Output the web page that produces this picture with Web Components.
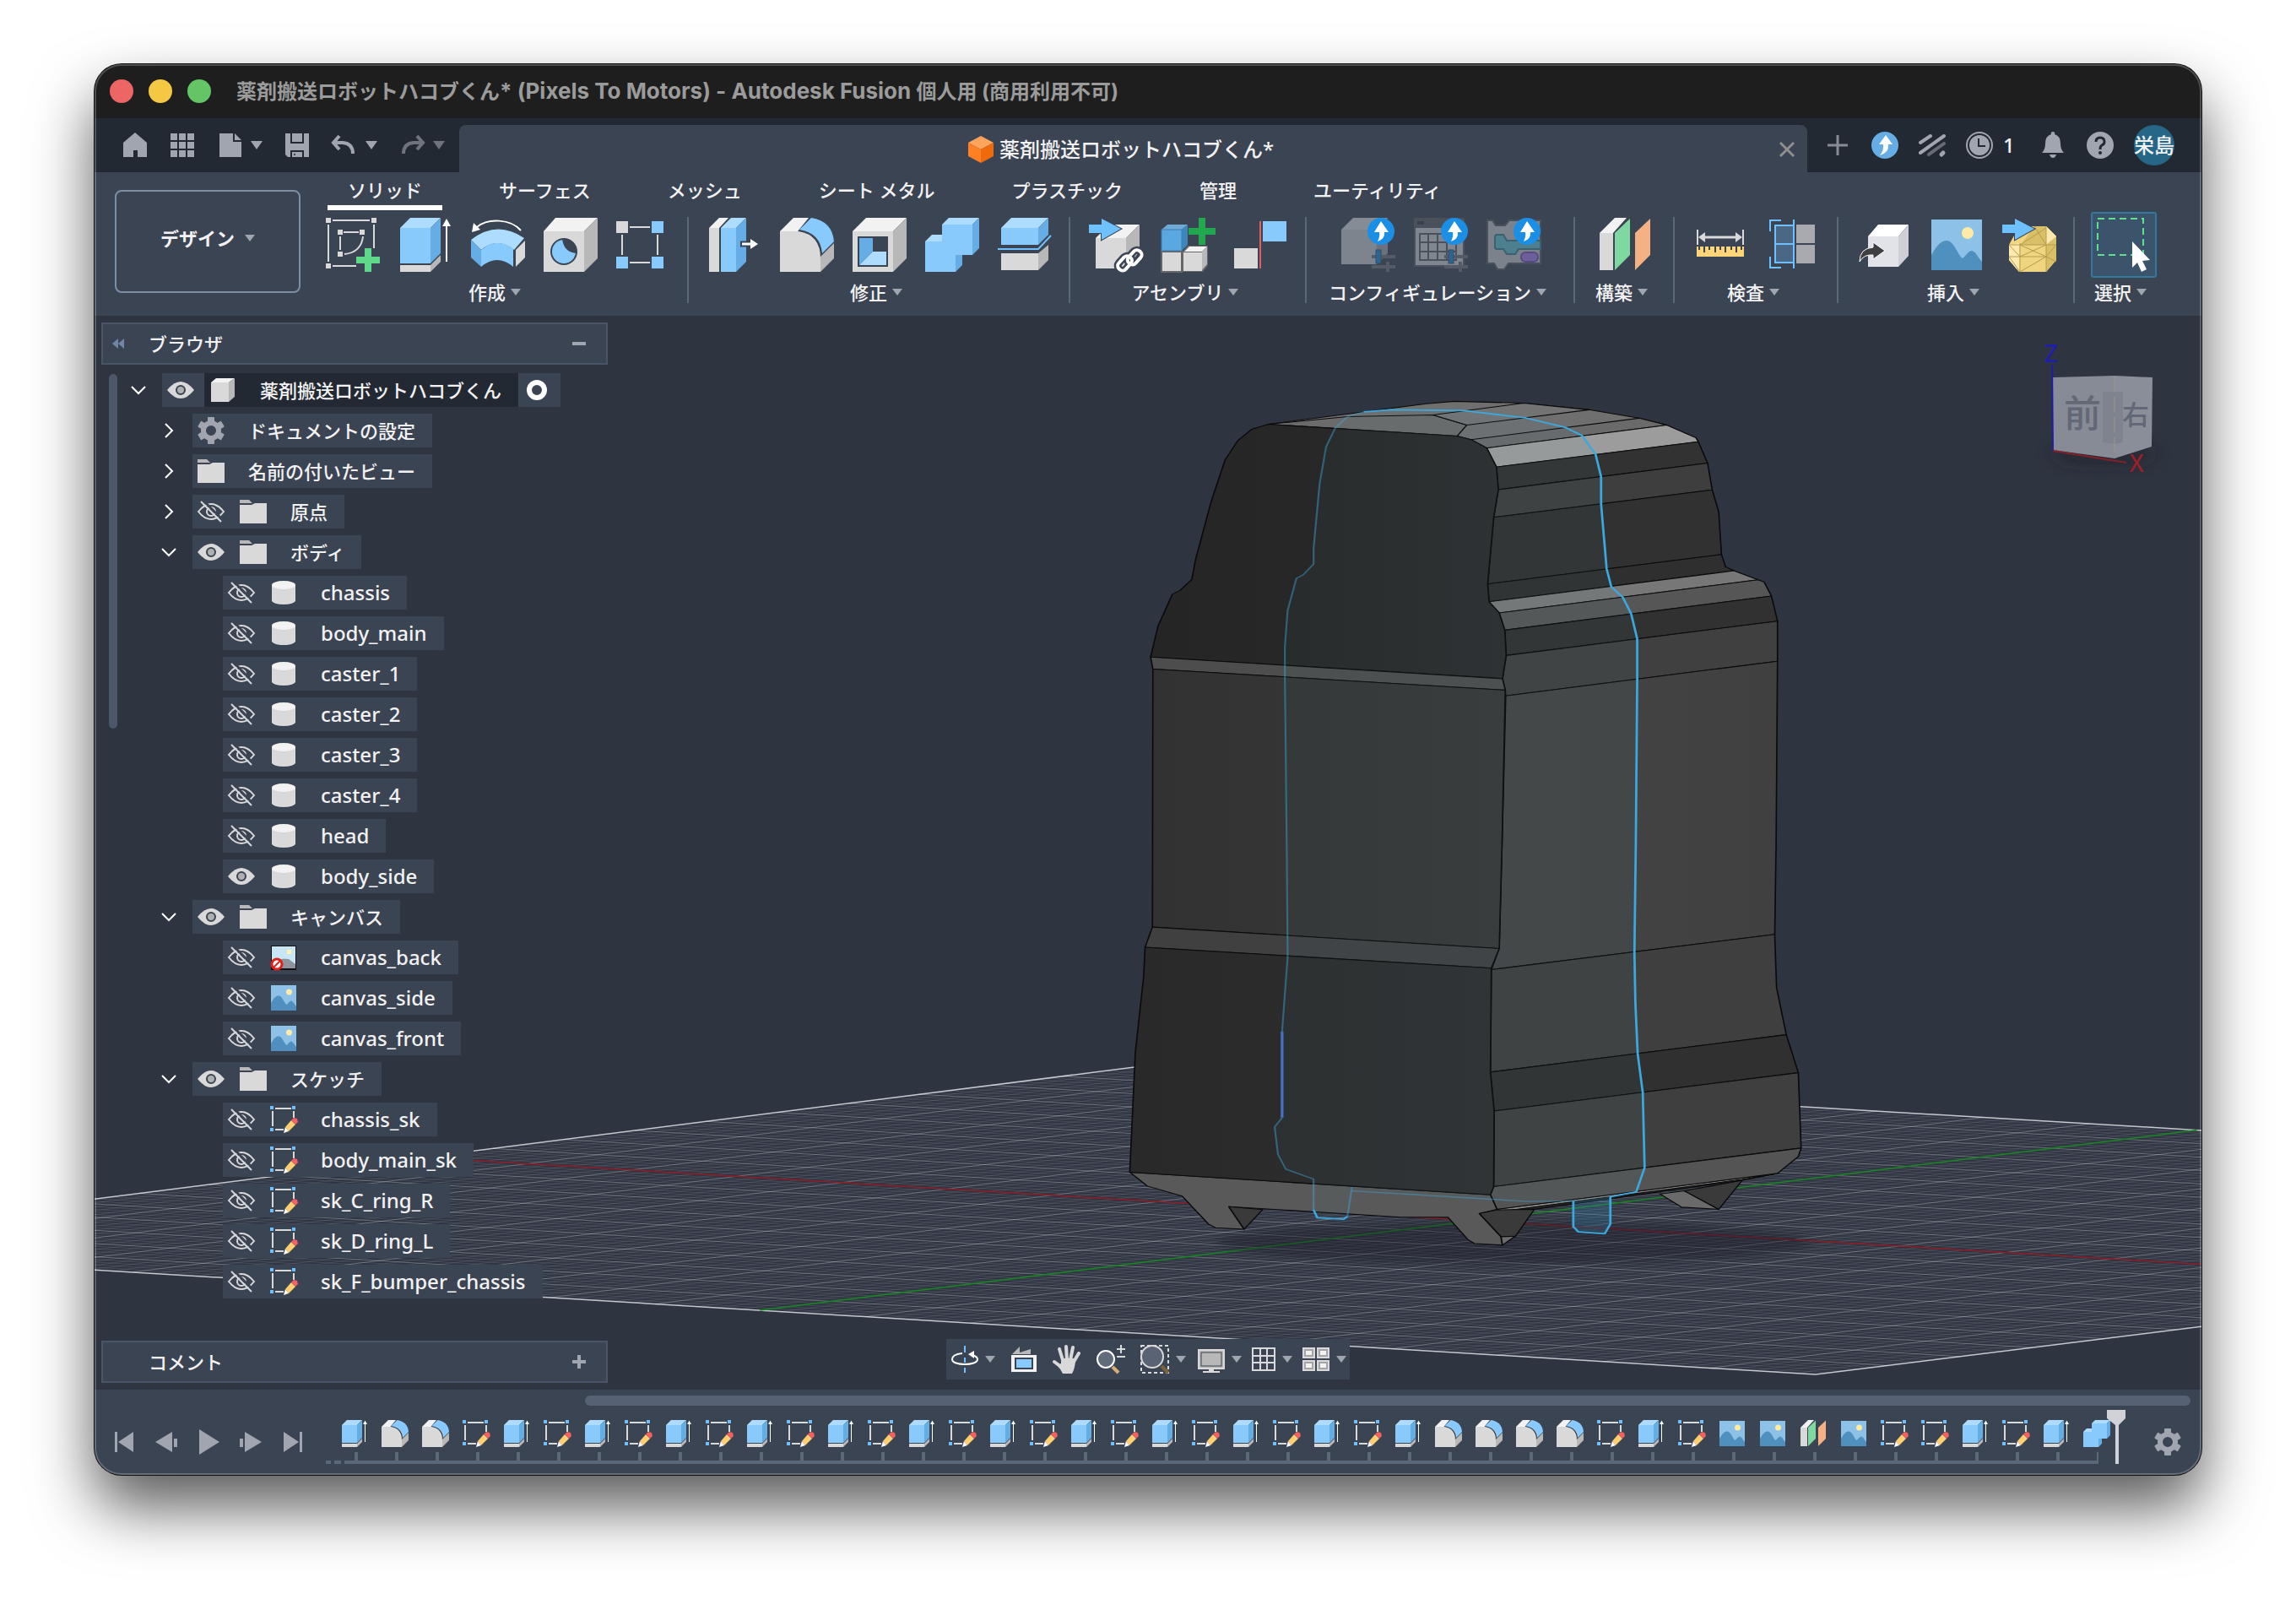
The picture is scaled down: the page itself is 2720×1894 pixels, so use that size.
<!DOCTYPE html>
<html lang="ja">
<head>
<meta charset="utf-8">
<title>薬剤搬送ロボットハコブくん* (Pixels To Motors) - Autodesk Fusion</title>
<style>
  :root {
    --panel: #3b4453;
    --dark: #222933;
    --canvas: #2e3440;
    --line: #5a687a;
    --mute: #a1a5af;
    --text: #f2f2f2;
  }
  body {
    margin: 0;
    min-height: 100vh;
    box-sizing: border-box;
    padding: 76px 112px 147px;
    display: flex;
    background: #fff;
    color: var(--text);
    font: 500 22px/32px "Noto Sans", "Noto Sans CJK JP", sans-serif;
  }
  title-bar span { font-size: 26px; }
</style>
</head>
<body>
<app-window>
  <title-bar slot="title">薬剤搬送ロボットハコブくん<span>* (Pixels To Motors) - Autodesk Fusion </span>個人用 (商用利用不可)</title-bar>
  <app-bar slot="bar">薬剤搬送ロボットハコブくん*</app-bar>
  <ribbon-bar slot="ribbon">
    <ribbon-group label="作成" tools="sketch extrude revolve hole pattern"></ribbon-group>
    <ribbon-group label="修正" tools="presspull fillet shell combine split"></ribbon-group>
    <ribbon-group label="アセンブリ" tools="insertlink newcomponent joint"></ribbon-group>
    <ribbon-group label="コンフィギュレーション" tools="config configtable configblocks" wide></ribbon-group>
    <ribbon-group label="構築" tools="plane"></ribbon-group>
    <ribbon-group label="検査" tools="measure section"></ribbon-group>
    <ribbon-group label="挿入" tools="derive image mesh"></ribbon-group>
    <ribbon-group label="選択" tools="select" active></ribbon-group>
  </ribbon-bar>
  <model-view slot="view">
    <panel-bar slot="browser" icon="minus" collapsible>ブラウザ</panel-bar>
    <tree-row slot="tree" level="0" state="open" eye="eye" icon="cube" root>薬剤搬送ロボットハコブくん</tree-row>
    <tree-row slot="tree" level="1" state="closed" icon="gear">ドキュメントの設定</tree-row>
    <tree-row slot="tree" level="1" state="closed" icon="folder">名前の付いたビュー</tree-row>
    <tree-row slot="tree" level="1" state="closed" eye="eyeoff" icon="folder">原点</tree-row>
    <tree-row slot="tree" level="1" state="open" eye="eye" icon="folder">ボディ</tree-row>
    <tree-row slot="tree" level="2" eye="eyeoff" icon="body">chassis</tree-row>
    <tree-row slot="tree" level="2" eye="eyeoff" icon="body">body_main</tree-row>
    <tree-row slot="tree" level="2" eye="eyeoff" icon="body">caster_1</tree-row>
    <tree-row slot="tree" level="2" eye="eyeoff" icon="body">caster_2</tree-row>
    <tree-row slot="tree" level="2" eye="eyeoff" icon="body">caster_3</tree-row>
    <tree-row slot="tree" level="2" eye="eyeoff" icon="body">caster_4</tree-row>
    <tree-row slot="tree" level="2" eye="eyeoff" icon="body">head</tree-row>
    <tree-row slot="tree" level="2" eye="eye" icon="body">body_side</tree-row>
    <tree-row slot="tree" level="1" state="open" eye="eye" icon="folder">キャンバス</tree-row>
    <tree-row slot="tree" level="2" eye="eyeoff" icon="imageoff">canvas_back</tree-row>
    <tree-row slot="tree" level="2" eye="eyeoff" icon="image">canvas_side</tree-row>
    <tree-row slot="tree" level="2" eye="eyeoff" icon="image">canvas_front</tree-row>
    <tree-row slot="tree" level="1" state="open" eye="eye" icon="folder">スケッチ</tree-row>
    <tree-row slot="tree" level="2" eye="eyeoff" icon="sketchpen">chassis_sk</tree-row>
    <tree-row slot="tree" level="2" eye="eyeoff" icon="sketchpen">body_main_sk</tree-row>
    <tree-row slot="tree" level="2" eye="eyeoff" icon="sketchpen">sk_C_ring_R</tree-row>
    <tree-row slot="tree" level="2" eye="eyeoff" icon="sketchpen">sk_D_ring_L</tree-row>
    <tree-row slot="tree" level="2" eye="eyeoff" icon="sketchpen">sk_F_bumper_chassis</tree-row>
    <panel-bar slot="comment" icon="plus">コメント</panel-bar>
    <nav-bar slot="nav"></nav-bar>
  </model-view>
  <time-line slot="timeline"></time-line>
</app-window>

<script>
const BASE = `
  :host, *, *::before, *::after { box-sizing: border-box; }
  button { font: inherit; color: inherit; background: none; border: 0; padding: 0; margin: 0; display: flex; align-items: center; }
  ul, ol { list-style: none; margin: 0; padding: 0; }
`;
const define = (name, css, html) => customElements.define(name, class extends HTMLElement {
  connectedCallback() {
    if (this.shadowRoot) return;
    const root = this.attachShadow({ mode: 'open' });
    root.innerHTML = `<style>${BASE}${css}</style>` + (typeof html === 'function' ? html(this) : html);
  }
});

/* ---------- icons ---------- */
const P = (points, fill, extra = '') => `<polygon points="${points}" fill="${fill}" ${extra}/>`;
const R = (x, y, w, h, fill, extra = '') => `<rect x="${x}" y="${y}" width="${w}" height="${h}" fill="${fill}" ${extra}/>`;
const L = (d, stroke, w = 2, extra = '') => `<path d="${d}" fill="none" stroke="${stroke}" stroke-width="${w}" ${extra}/>`;
const F = (d, fill, extra = '') => `<path d="${d}" fill="${fill}" ${extra}/>`;
const BG = '#3b4453', B1 = '#89cafc', B2 = '#addcff', B3 = '#65ade4', G1 = '#d9d9d9', G2 = '#f2f2f2', G3 = '#b8b8b8', M = '#a1a5af', AR = '#6ec1ff';
const ARROW_IN = F('M0 8H15V1L38 13 15 26V18H0Z', AR, `stroke="${BG}" stroke-width="2" paint-order="stroke"`);
const UP = (cx, cy) => `<circle cx="${cx}" cy="${cy}" r="16" fill="#1b8ee6"/>` +
  `<path transform="translate(${cx} ${cy})" d="M0-12 9 1H4Q5 9-4 12-1 6-2 1H-8Z" fill="#fff"/>`;
const SLIDERS = R(36, 44, 28, 4, '#555b66') + R(36, 56, 28, 4, '#555b66') + R(53, 52, 4, 12, '#555b66') + R(41, 38, 6, 16, '#2b6596', 'stroke="#3a4a5c"');
const IMG = R(2, 2, 60, 60, '#8dc1e8') + '<circle cx="45" cy="18" r="7" fill="#ffeaa6"/>' +
  F('M2 44C10 30 15 27 20 27 29 27 33 44 39 48 44 44 46 39 50 39 55 40 57 47 62 52V62H2Z', '#4f90bf');
const GEAR = (() => {
  let d = '';
  for (let i = 0; i < 6; i++) d += `<rect x="12" y="0" width="8" height="9" rx="1" transform="rotate(${i * 60} 16 16)"/>`;
  return `<g fill="${M}">${d}<path fill-rule="evenodd" d="M16 4a12 12 0 1 0 0 24 12 12 0 0 0 0-24Zm0 6a6 6 0 1 1 0 12 6 6 0 0 1 0-12Z"/></g>`;
})();

const ICONS = {
  sketch: [64, [[0,0],[54,0],[0,54],[14,14],[40,14],[14,40]].map(([x, y]) => R(x, y, 6, 6, G1)).join('') +
    L('M8 3H52M3 8V52M57 8V36M8 57H36M21 17H39M17 22V38M44 22Q42 41 22 43', G1) +
    R(36, 46, 28, 8, '#5fd889') + R(46, 36, 8, 28, '#5fd889')],
  extrude: [64, P('2,12 14,0 50,0 38,12', B2) + P('38,12 50,0 50,42 38,54', B3) + R(2, 12, 36, 42, B1) + R(2, 56, 36, 8, G1) + P('38,56 50,44 50,52 38,64', G3) +
    L('M57 8V52', '#fff', 2) + P('57,1 62,10 52,10', '#fff')],
  revolve: [64, F('M0 26Q31 2 63 24L51 38Q31 22 12 38Z', B2) + F('M12 38Q31 22 50 37V58Q31 42 12 58Z', B1) + P('0,26 12,38 12,58 0,47', B3) +
    P('53,38 64,27 64,47 53,58', G1) + L('M59 15C47 1 20 0 7 11', '#fff', 2) + P('1,17 3,6 11,14', '#fff')],
  hole: [64, P('0,16 14,0 64,0 48,16', G2) + P('48,16 64,0 64,48 48,64', G3) + R(0, 16, 48, 48, G1) +
    `<circle cx="24" cy="40" r="16" fill="${BG}"/><circle cx="24" cy="40" r="14" fill="${B1}"/>` + F('M22 25A15 15 0 0 1 39 42Q24 41 22 25Z', BG)],
  pattern: [64, R(0, 4, 14, 14, G1) + R(42, 4, 14, 14, B1) + R(0, 46, 14, 14, B1) + R(42, 46, 14, 14, B1) + L('M16 11H40M7 20V44M49 20V44M16 53H40', G1)],
  presspull: [64, P('2,12 14,0 25,0 14,12', G2) + R(2, 12, 12, 52, G1) + P('16,12 28,0 46,0 34,12', B2) + P('34,12 46,0 46,52 34,64', B3) + R(16, 12, 18, 52, B1) +
    L('M39 31H53', BG, 7) + L('M41 31H54', '#fff', 3) + P('51,25 60,31 51,37', '#fff')],
  fillet: [64, P('0,16 16,0 34,0 21,16', G2) + F('M48 46 64 30V48L48 64Z', G3) + F('M0 16H22Q48 20 48 48V64H0Z', G1) + F('M23 14 37 0Q62 4 64 28L50 42Q48 18 23 14Z', B1)],
  shell: [64, P('0,16 16,0 64,0 48,16', G2) + P('48,16 64,0 64,48 48,64', G3) + R(0, 16, 48, 48, G1) + R(6, 22, 36, 36, BG) + P('8,24 24,24 24,40 8,56', B3) + P('8,56 24,40 40,40 40,56', B2)],
  combine: [64, P('20,8 28,0 64,0 56,8', B2) + P('56,8 64,0 64,36 56,44', B3) + P('0,28 8,20 20,20 20,28', B2) + P('36,44 44,44 44,56 36,64', B3) + F('M20 8H56V44H36V64H0V28H20Z', B1)],
  split: [64, P('4,12 16,0 60,0 48,12', B2) + P('48,12 60,0 60,20 48,32', B3) + R(4, 12, 44, 20, B1) + L('M0 37H48L63 21', AR) + R(4, 42, 44, 20, G1) + P('48,42 60,32 60,50 48,62', G3)],
  insertlink: [64, P('8,24 24,8 60,8 44,24', G2) + P('44,24 60,8 60,40 44,60', G3) + R(8, 24, 36, 36, G1) + ARROW_IN +
    [[BG, 9], ['#fff', 4]].map(([c, w]) => `<g fill="none" stroke="${c}" stroke-width="${w}" transform="rotate(42 48 50)"><rect x="41" y="47" width="11" height="19" rx="5"/><rect x="45" y="34" width="11" height="19" rx="5"/></g>`).join('')],
  newcomponent: [64, R(0, 40, 24, 24, G1, 'stroke="#666" stroke-width="2"') + P('25,40 31,33 55,33 55,56 49,64 25,64', '#666') + R(26, 41, 22, 22, G1) + P('27,40 33,34 54,34 48,40', G2) + P('48,40 54,34 54,55 48,62', G3) +
    P('0,14 7,8 31,8 24,14', '#6fa9d6') + P('24,14 31,8 31,32 24,39', '#3d86bd') + R(0, 14, 24, 25, '#5ba7e0', 'stroke="#417fae"') + R(32, 12, 32, 8, '#21a84f') + R(44, 0, 8, 32, '#21a84f')],
  joint: [64, R(0, 36, 28, 24, G1) + R(30, 4, 2, 56, '#e0605e') + R(34, 4, 28, 24, B1)],
  config: [64, P('0,14 14,0 55,0 42,14', '#868c96') + P('42,14 55,0 55,42 42,55', '#6a717c') + R(0, 14, 42, 41, '#7d848e') + UP(47, 16) + SLIDERS],
  configtable: [64, R(0, 0, 60, 58, '#4b515b') + R(4, 4, 8, 4, '#394150') + R(2, 12, 56, 44, '#7f8690') + L('M7 19H50V50H7ZM7 29H50M7 40H50M17 19V50M28 19V50M39 19V50', '#4b515b', 2) + UP(48, 16) + SLIDERS],
  configblocks: [64, F('M1 3H7L11 9H22L27 3H64V54H26L21 61H13L9 54H1Z', '#7b828c', 'stroke="#4b515b" stroke-width="2"') + F('M12 20H20L24 27H64V37H38L34 43H24L20 37H12Q10 37 10 34V24Q10 20 12 20Z', '#4d7f8e', 'stroke="#39616f" stroke-width="2"') +
    R(41, 41, 20, 11, '#6d5f9a', 'rx="5" stroke="#574b80" stroke-width="2"') + UP(48, 16)],
  plane: [64, P('2,18 20,0 34,0 18,18', G2) + R(2, 18, 16, 44, G1) + P('20,18 38,1 38,44 20,62', '#7fd8a0') + P('44,18 62,1 62,44 44,62', '#f5b183')],
  measure: [64, R(4, 34, 56, 12, '#ffd57a') + L('M7 34V38M13 34V41M19 34V38M26 34V41M32 34V38M38 34V41M45 34V38M51 34V41M57 34V38', BG, 2) + L('M5 14V32M59 14V32', G1) + L('M12 23H52', G1, 3) + P('6,23 14,17 14,29', G1) + P('58,23 50,17 50,29', G1)],
  section: [64, L('M5 16V3H18M5 46V59H18M33 2V60', AR) + R(11, 9, 22, 22, '#4a6886', `stroke="${AR}" stroke-width="2"`) + R(11, 31, 22, 22, '#4a6886', `stroke="${AR}" stroke-width="2"`) + R(36, 8, 22, 22, '#a9aab0') + R(36, 32, 22, 22, '#a9aab0')],
  derive: [64, P('13,22 25,8 61,8 49,22', '#fff') + P('49,22 61,8 61,45 49,58', '#cdced6') + R(13, 22, 36, 36, '#e2e3e8') + F('M3 52Q3 36 19 35V29L33 39 19 49V44Q8 43 3 52Z', '#3f3f42', 'stroke="#fff" stroke-width="1"')],
  image: [64, IMG],
  mesh: [64, P('8,32 20,10 52,10 64,22 64,50 52,64 20,64 8,50', '#f2d684') + P('22,32 38,10 52,10 64,22 64,50 52,64 52,32', '#d9bf66') + P('22,32 52,32 52,64 22,64', '#f0d580') + P('8,32 20,30 20,64 8,50', '#ffe9ad') + P('52,10 64,22 52,32', '#ffe9ad') +
    L('M8 32H64M8 46H52L64 32M21 30V64M52 10V64M21 32 52 46 21 64M52 32 21 46 8 32M52 46 64 52M38 10 52 32M21 32 52 12M8 46 21 64', '#b59c4e', 1) + ARROW_IN],
  select: [64, R(1, 1, 54, 43, 'none', 'stroke="#5fe08c" stroke-width="2" stroke-dasharray="8 5"') + P('42,28 42,59 48,53 53,64 59,61 54,51 63,50', '#fff')],

  home: [32, F('M2 13 16 1 30 13V30H19V22H14V30H2Z', M)],
  apps: [32, [2, 12, 22].map(x => [2, 12, 22].map(y => R(x, y, 8, 8, M)).join('')).join('')],
  file: [32, F('M4 2H20V12H30V30H4Z', M) + P('22,2 30,10 22,10', M)],
  save: [32, F('M2 2H8V14H24V2H30V30H24V22H8V30H5L2 27Z', M) + R(10, 2, 12, 10, M) + R(10, 24, 12, 6, M) + R(12, 26, 2, 2, BG)],
  undo: [32, L('M10 5 3 13 10 21M4 13H14Q26 14 26 26', M, 4)],
  redo: [32, `<g opacity=".6">${L('M22 5 29 13 22 21M28 13H18Q6 14 6 26', M, 4)}</g>`],
  tri: [16, P('1,3 15,3 8,13', M)],
  tri12: [12, P('0,2 12,2 6,10', M)],
  doccube: [32, P('16,0 31,8 16,16 1,8', '#ffa45c') + P('1,8 16,16 16,32 1,24', '#ff8124') + P('31,8 16,16 16,32 31,24', '#f06a0c')],
  close: [24, L('M4 4 20 20M20 4 4 20', '#8f8f8f', 3)],
  add: [32, L('M16 4V28M4 16H28', M, 3, 'opacity=".8"')],
  upgrade: [32, `<circle cx="16" cy="16" r="16" fill="#65ade4"/>` + F('M17 4 25 15H20Q21 25 10 28 15 22 14 15H9Z', '#fff')],
  slashes: [32, L('M2 13 14 5M2 25 30 5', M, 4, 'stroke-linecap="round"') + L('M12 27 30 14', '#666b76', 4, 'stroke-linecap="round"') + L('M27 27 29 25', M, 5, 'stroke-linecap="round"')],
  clock: [32, `<circle cx="16" cy="16" r="15" fill="none" stroke="${M}" stroke-width="2"/><circle cx="16" cy="16" r="12" fill="${M}"/>` + L('M15 8V17H23', '#222933', 2)],
  bell: [32, F('M16 0Q19 0 18 3 25 5 25 14 25 21 29 25H3Q7 21 7 14 7 5 14 3 13 0 16 0Z', M) + F('M12 27H20Q19 31 16 31T12 27Z', M)],
  help: [32, `<circle cx="16" cy="16" r="16" fill="${M}"/>` + L('M11 12Q11 7 16 7T21 12Q21 15 18 16 16 17 16 21', '#222933', 3) + '<circle cx="16" cy="25" r="2" fill="#222933"/>'],

  back2: [16, P('8,2 8,14 1,8', '#7186a5') + P('15,2 15,14 8,8', '#7186a5')],
  minus: [16, R(0, 6, 16, 4, M)],
  plus: [16, R(0, 6, 16, 4, M) + R(6, 0, 4, 16, M)],
  open: [32, L('M8 12 16 20 24 12', '#fff', 2)],
  closed: [32, L('M12 8 20 16 12 24', '#fff', 2)],
  eye: [32, F('M0 16Q8 6 16 6T32 16Q24 26 16 26T0 16Z', G1) + `<circle cx="16" cy="16" r="5" fill="#b0b0b0" stroke="${BG}" stroke-width="2"/>`],
  eyeoff: [32, L('M1 16Q8 7 16 7T31 16Q24 25 16 25T1 16Z', G1, 2) + `<circle cx="16" cy="16" r="5" fill="none" stroke="${G1}" stroke-width="2"/>` + L('M7 3 31 27', BG, 3) + L('M4 4 28 28', G1, 2)],
  cube: [32, P('2,7 8,2 30,2 23,7', G2) + P('23,7 30,2 30,24 23,30', G3) + R(2, 7, 21, 23, G1)],
  gear: [32, GEAR],
  folder: [32, F('M0 2H11L15 6H0Z', '#b8b8b8') + F('M0 8H14L18 6H32V30H0Z', G1)],
  body: [32, F('M2 7V26Q5 30 16 30T30 26V7Z', G1) + `<ellipse cx="16" cy="7" rx="14" ry="5" fill="${G2}"/>`],
  imageoff: [32, R(1, 2, 30, 29, '#111') + R(2, 3, 28, 26, '#c9e6f5') + R(20, 7, 5, 5, '#fff3b8') + F('M2 26C10 16 16 18 22 18L30 24V29H2Z', '#8d949c') +
    '<circle cx="8" cy="24" r="6" fill="#fff" stroke="#e0201c" stroke-width="3"/>' + L('M4 28 12 20', '#e0201c', 2)],
  sketchpen: [32, R(0, 0, 4, 4, AR) + R(26, 0, 4, 4, AR) + R(0, 26, 4, 4, AR) + L('M6 3H25M3 6V24M28 6V14M6 28H16', G1, 2) +
    P('16,32 18,25 22,30', '#fff') + P('18,25 25,17 30,22 22,30', '#ffd071') + P('25,17 28,14 32,15 33,19 30,22', '#f2605f')],
  radio: [32, '<circle cx="16" cy="16" r="9" fill="none" stroke="#fff" stroke-width="6"/>'],

  orbit: [32, L('M16 0V8M16 14V20M16 26V32', AR, 2) + L('M13 9C4 10 1 12 1 16 1 20 8 22 16 22S31 20 31 16Q31 13 25 11', '#fff', 2) + P('20,10 27,6 27,15', '#fff')],
  lookat: [32, F('M2 10 11 1V8L24 4V10Z', '#b8b8b8') + R(1, 11, 30, 20, G2) + R(6, 15, 20, 12, B1, `stroke="${BG}" stroke-width="2"`)],
  hand: [34, `<g stroke-linecap="round">` + L('M16 2 17 18', G1, 4) + L('M8 5 12 18', G1, 4) + L('M24 3 21 18', G1, 4) + L('M31 10 25 20', G1, 4) + L('M2 20 10 26', G1, 4) + '</g>' + F('M10 16H25L27 20Q26 29 23 34H12Q9 28 5 24L10 22Z', G1)],
  zoom: [34, `<circle cx="11" cy="17" r="10" fill="#626b7b" stroke="#fff" stroke-width="2"/>` + L('M19 26 26 33', '#dcae73', 4) + L('M29 0V10M24 5H34M24 14H34', G1, 2)],
  zoomwin: [34, R(1, 1, 32, 32, 'none', `stroke="${G1}" stroke-width="2" stroke-dasharray="4 3"`) + `<circle cx="14" cy="14" r="13" fill="#5a6373" stroke="${G1}" stroke-width="2"/>` + L('M25 25 33 33', '#7d6138', 4)],
  monitor: [32, R(1, 5, 30, 22, '#b8b8b8', `stroke="${G1}" stroke-width="2"`) + R(4, 8, 24, 16, 'none', `stroke="${BG}"`) + R(13, 28, 6, 3, G1) + R(6, 30, 20, 2, G1)],
  grid: [28, L('M1 1H27V27H1ZM1 10H27M1 18H27M10 1V27M18 1V27', G1, 2)],
  quad: [32, [[0, 2], [17, 2], [0, 17], [17, 17]].map(([x, y]) => R(x, y, 15, 13, G1) + R(x + 3, y + 3, 9, 7, G2, 'stroke="#a5a5a5" stroke-width="2"')).join('')],

  first: [26, R(2, 1, 3, 24, M) + P('24,1 24,25 6,13', M)],
  prev: [26, P('20,1 20,25 0,13', M) + R(22, 9, 4, 10, M)],
  play: [26, P('2,0 26,15 2,30', M, 'transform="translate(0 -2)"')],
  next: [26, P('6,1 6,25 26,13', M) + R(0, 9, 4, 10, M)],
  last: [26, R(21, 1, 3, 24, M) + P('2,1 2,25 20,13', M)]
};
define('ui-icon', `
  :host { display: block; flex: none; }
  svg { display: block; overflow: visible; }
`, el => {
  const [box, art] = ICONS[el.getAttribute('name')];
  const size = el.getAttribute('size') || box;
  return `<svg width="${size}" height="${size}" viewBox="0 0 ${box} ${box}" aria-hidden="true">${art}</svg>`;
});
const icon = (name, size) => `<ui-icon name="${name}"${size ? ` size="${size}"` : ''}></ui-icon>`;

/* ---------- window ---------- */
define('app-window', `
  :host { display: flex; flex-direction: column; flex: 1; min-width: 0; position: relative; border-radius: 32px; overflow: hidden; background: var(--canvas);
    box-shadow: 0 0 0 1px #111, 0 38px 72px rgba(0, 0, 0, .65); }
  :host::after { content: ""; position: absolute; inset: 0; border: 2px solid rgba(255, 255, 255, .22); border-radius: inherit; pointer-events: none; }
  ::slotted([slot="view"]) { flex: 1; }
`, `<slot name="title"></slot><slot name="bar"></slot><slot name="ribbon"></slot><slot name="view"></slot><slot name="timeline"></slot>`);

define('title-bar', `
  :host { display: flex; align-items: center; height: 64px; padding: 0 18px; gap: 18px; background: #1e1e1e; color: #9b9b9b;
    font: 700 24px/32px Inter, "Noto Sans CJK JP", sans-serif; }
  button { width: 28px; height: 28px; border-radius: 50%; }
  .close { background: #ed6665; } .min { background: #f4c843; } .max { background: #64c466; }
  .text { margin-left: 12px; white-space: pre; }
`, `<button class="close" aria-label="閉じる"></button><button class="min" aria-label="しまう"></button><button class="max" aria-label="拡大"></button><div class="text"><slot></slot></div>`);

define('app-bar', `
  :host { display: flex; height: 64px; background: var(--dark); }
  .left { display: flex; align-items: center; gap: 24px; padding: 0 16px 0 32px; }
  .left button { gap: 8px; }
  .tab { flex: 1; display: flex; align-items: center; margin-top: 8px; padding: 2px 12px 0 0; background: var(--panel); border-radius: 8px 8px 0 0; font-size: 24px; }
  .name { flex: 1; display: flex; align-items: center; justify-content: center; gap: 6px; padding-left: 6px; }
  .right { display: flex; align-items: center; gap: 24px; padding: 0 32px 0 20px; font-size: 24px; }
  .jobs { width: 63px; gap: 12px; }
  .user { width: 48px; height: 48px; border-radius: 50%; background: #266687; justify-content: center; font-size: 24px; white-space: nowrap; }
`, `<div class="left">
    <button aria-label="ホーム">${icon('home')}</button><button aria-label="データパネル">${icon('apps')}</button>
    <button aria-label="ファイル">${icon('file')}${icon('tri')}</button><button aria-label="保存">${icon('save')}</button>
    <button aria-label="元に戻す">${icon('undo')}${icon('tri')}</button><button aria-label="やり直し">${icon('redo')}<ui-icon name="tri" style="opacity:.6"></ui-icon></button>
  </div>
  <div class="tab"><div class="name">${icon('doccube')}<span><slot></slot></span></div><button aria-label="タブを閉じる">${icon('close')}</button></div>
  <div class="right">
    <button aria-label="新規">${icon('add')}</button><button aria-label="アップグレード">${icon('upgrade')}</button><button aria-label="拡張機能">${icon('slashes')}</button>
    <button class="jobs">${icon('clock')}1</button><button aria-label="通知">${icon('bell')}</button><button aria-label="ヘルプ">${icon('help')}</button>
    <button class="user">栄島</button>
  </div>`);

/* ---------- ribbon ---------- */
define('ribbon-bar', `
  :host { display: flex; height: 170px; background: var(--panel); }
  .space { align-self: center; justify-content: center; gap: 12px; width: 220px; height: 122px; margin: 0 8px 6px 24px; padding-bottom: 8px; border: 2px solid #7b8ea6; border-radius: 8px; font-weight: 700; }
  .main { flex: 1; display: flex; flex-direction: column; }
  nav { display: flex; gap: 43px; padding: 6px 0 0 24px; height: 45px; }
  nav button { padding: 0 24px 3px; align-items: center; border-bottom: 6px solid transparent; white-space: nowrap; }
  nav button[aria-selected="true"] { border-color: #fff; }
  .groups { display: flex; flex: 1; padding-top: 8px; }
`, `<button class="space">デザイン${icon('tri12')}</button>
  <div class="main">
    <nav role="tablist">${['ソリッド', 'サーフェス', 'メッシュ', 'シート メタル', 'プラスチック', '管理', 'ユーティリティ']
      .map((t, i) => `<button role="tab" aria-selected="${i === 0}">${t}</button>`).join('')}</nav>
    <div class="groups"><slot></slot></div>
  </div>`);

define('ribbon-group', `
  :host { display: flex; flex-direction: column; align-items: center; height: 102px; padding: 0 20px 0 22px; border-left: 2px solid var(--line); }
  :host(:first-child) { border-color: transparent; margin-left: -2px; }
  :host([wide]) { padding: 0 22px 0 24px; }
  .tools { display: flex; gap: 22px; height: 64px; margin: 1px 0 8px; align-items: center; }
  .label { gap: 6px; padding: 0 10px 0 2px; white-space: nowrap; }
  :host([active]) { padding-left: 19px; }
  :host([active]) .tools button { padding: 5px; border: 2px solid #33789f; border-radius: 3px; background: #3c546b; }
`, el => `<div class="tools">${el.getAttribute('tools').split(' ').map(t => `<button aria-label="${t}">${icon(t)}</button>`).join('')}</div>
  <button class="label">${el.getAttribute('label')}${icon('tri12')}</button>`);

/* ---------- model view ---------- */
const GRID = (() => {
  // Perspective map of the unit square onto the floor plane (left, top, right, bottom corners).
  const [x0, y0, x1, y1, x2, y2, x3, y3] = [-336, 1477, 1344, 1264, 3876, 1414, 2151, 1628];
  const dx1 = x1 - x2, dx2 = x3 - x2, sx = x0 - x1 + x2 - x3, dy1 = y1 - y2, dy2 = y3 - y2, sy = y0 - y1 + y2 - y3;
  const det = dx1 * dy2 - dx2 * dy1, g = (sx * dy2 - dx2 * sy) / det, h = (dx1 * sy - sx * dy1) / det;
  const at = (u, v) => {
    const w = g * u + h * v + 1;
    return [((x1 - x0 + g * x1) * u + (x3 - x0 + h * x3) * v + x0) / w, ((y1 - y0 + g * y1) * u + (y3 - y0 + h * y3) * v + y0) / w].map(n => n.toFixed(1)).join(' ');
  };
  let minor = '', major = '';
  for (let i = 1; i < 100; i++) {
    const t = i / 100, d = `M${at(t, 0)}L${at(t, 1)}M${at(0, t)}L${at(1, t)}`;
    if (i === 50) continue;
    if (i % 5) minor += d; else major += d;
  }
  return `<polygon points="${x0},${y0} ${x1},${y1} ${x2},${y2} ${x3},${y3}" fill="#2f3542" stroke="#c4c7cc" stroke-width="1.5"/>
    <path d="${minor}" stroke="#fff" stroke-opacity=".1"/><path d="${major}" stroke="#fff" stroke-opacity=".28"/>
    <path d="M${at(.5, 0)}L${at(.5, 1)}" stroke="#8f1d26" stroke-width="1.5"/><path d="M${at(0, .5)}L${at(1, .5)}" stroke="#158a1e" stroke-width="1.5"/>`;
})();

const EDGE = 'stroke="#0a0a0a"';
const ROBOT = `<g transform="translate(1300 440) scale(.5485 .3571)" stroke-linejoin="round" stroke-width="3">
  <ellipse cx="900" cy="2890" rx="640" ry="70" fill="#1a1e27" opacity=".4" filter="url(#soft)"/>
  ${P('1215,2728 1268,2718 1342,2779 1262,2772', '#6a6a6a', EDGE)}
  ${P('1268,2718 1393,2683 1342,2779', '#3a3a3a', EDGE)}
  ${P('369,175 710,107 771,99 921,105 1062,127 1170,155 1230,178 841,254 807,226 777,214', '#6f6f70', EDGE)}
  ${P('369,175 540,150 725,144 798,178 777,214', '#6b6b6b', EDGE)}
  ${P('725,144 921,105 1062,127 798,178', '#737374', EDGE)}
  ${P('807,226 1170,155 1230,178 841,254', '#6a6a6b', EDGE)}
  ${P('841,254 1230,178 1293,220 1298,233 862,317', '#9c9c9c', EDGE)}
  ${P('862,317 1298,233 1318,304 866,392', '#323232', EDGE)}
  ${P('866,392 1318,304 1328,393 856,484', '#3e3e3e', EDGE)}
  ${P('856,484 1328,393 1342,465 1348,607 843,705', '#313131', EDGE)}
  ${P('843,705 1348,607 1357,648 1375,661 846,764', '#2f2f2f', EDGE)}
  ${P('846,764 1375,661 1427,691 868,801', '#777778', EDGE)}
  ${P('868,801 1427,691 1440,698 1456,745 880,858', '#565656', EDGE)}
  ${P('880,858 1456,745 1469,828 883,942', '#313131', EDGE)}
  ${P('883,942 1469,828 1469,961 882,1076 881,1057 875,1019', '#404040', EDGE)}
  ${P('882,1076 1469,961 1466,1568 1463,1867 851,1984 868,1914 874,1568', 'url(#side)', EDGE)}
  ${P('851,1984 1463,1867 1467,2044 1488,2200 849,2324', '#3f3f3f', EDGE)}
  ${P('849,2324 1488,2200 1514,2326 857,2453', '#303030', EDGE)}
  ${P('857,2453 1514,2326 1520,2576 856,2704', '#3f3f3f', EDGE)}
  ${P('944,2779 1393,2683 1469,2660 863,2779', '#262626', EDGE)}
  ${P('825,2793 863,2779 1469,2660 1393,2680 880,2784', '#8a8a8a', EDGE)}
  ${P('856,2704 1520,2576 1514,2604 1469,2660 863,2779 849,2731', '#545454', EDGE)}
  ${P('70,2656 849,2731 863,2779 825,2793 872,2870 875,2898 815,2893 800,2879 757,2805 655,2805 284,2770 317,2845 255,2840 240,2828 183,2735 108,2702', '#595959', EDGE)}
  ${P('284,2770 357,2780 317,2845', '#3a3a3a', EDGE)}
  ${P('825,2793 863,2781 944,2779 903,2868 872,2870', '#3a3a3a', EDGE)}
  ${P('872,2870 903,2868 875,2898', '#6a6a6a', EDGE)}
  ${P('369,175 777,214 807,226 841,254 862,317 866,392 856,484 843,705 846,764 868,801 880,858 883,942 875,1019 115,947 131,845 162,739 178,727 204,690 212,625 246,430 276,293 303,230 333,192', 'url(#head)', EDGE)}
  ${P('115,947 875,1019 881,1057 120,987', '#4d4d4d', EDGE)}
  ${P('120,987 881,1057 874,1568 868,1914 119,1843', 'url(#front)', EDGE)}
  ${P('119,1843 868,1914 851,1979 103,1910', '#404041', EDGE)}
  ${P('103,1910 851,1979 849,2324 857,2453 856,2704 849,2731 70,2656 82,2259 100,2007', 'url(#low)', EDGE)}
  <path fill="#5a86a0" fill-opacity=".06" d="M575 134 633 127 792 130 925 154 1010 185 1047 213 1076 275 1088 349V440L1100 655 1110 714 1135 749 1153 804 1166 887V1020L1163 1568 1160 1925 1162 2091 1167 2263 1178 2392 1182 2641 1164 2721 1108 2738V2828L1096 2860 1039 2854 1028 2837V2751L928 2753 550 2718 540 2803 532 2812 475 2807 467 2781V2679L407 2646 390 2597 383 2506 399 2475V2189L411 1941 409 1568 405 1010V912L411 792 430 686 444 675 467 639V587L480 373 494 250 514 187 540 150Z"/>
  <path fill="#2f86b4" fill-opacity=".22" d="M1028 2751 1108 2738V2828L1096 2860 1039 2854 1028 2837Z"/>
  <g fill="none" stroke="#3ba9dd" stroke-width="5">
    <path d="M575 134 633 127 792 130 925 154 1010 185 1047 213 1076 275 1088 349V440L1100 655 1110 714 1135 749 1153 804 1166 887V1020L1163 1568 1160 1925 1162 2091 1167 2263 1178 2392 1182 2641 1164 2721 1108 2738V2828L1096 2860 1039 2854 1028 2837V2751"/>
    <path d="M467 2781 475 2807 532 2812 540 2803"/>
    <path opacity=".45" stroke-width="4" d="M575 134 540 150 514 187 494 250 480 373 467 587V639L444 675 430 686 411 792 405 912V1010L409 1568 411 1941 399 2189M399 2475 383 2506 390 2597 407 2646 467 2679V2781M540 2803 550 2705M550 2718 790 2740 928 2753 1028 2751"/>
    <path stroke="#456fcb" stroke-width="6" d="M399 2189V2475"/>
  </g></g>`;

const CUBE = `
  <ellipse cx="2492" cy="538" rx="62" ry="10" fill="#1b1f28" opacity=".6" filter="url(#soft)"/>
  ${P('2432,447 2505,445 2505,543 2432,533', '#878b95')}
  ${P('2505,445 2550,447 2549,529 2505,543', '#8a8e98')}
  ${P('2491,464 2515,464 2515,524 2506,526 2491,524', '#7e838d')}
  <path d="M2505 446V543" stroke="#9a968f" stroke-dasharray="18 6" fill="none"/>
  <path d="M2431 432 2432 534" stroke="#1c1ca8" stroke-width="2"/>
  <path d="M2432 534 2519 548" stroke="#85202a" stroke-width="2"/>
  <g text-anchor="middle" font-weight="500" font-family="'Noto Sans','Noto Sans CJK JP',sans-serif">
    <text x="2467" y="506" font-size="44" fill="#626875">前</text>
    <text x="2530" y="503" font-size="32" fill="#626875">右</text>
    <text x="2430" y="429" font-size="28" fill="#1e1eac">Z</text>
    <text x="2531" y="559" font-size="28" fill="#97202a">X</text>
  </g>`;

define('model-view', `
  :host { display: grid; grid-template: minmax(0, 1fr) / minmax(0, 1fr); min-height: 0; background: var(--canvas); }
  .scene { grid-area: 1 / 1; display: block; width: 100%; height: 100%; }
  .side { grid-area: 1 / 1; display: flex; flex-direction: column; width: 600px; margin: 8px; }
  .browser { display: flex; flex: 1; padding: 10px 0 0 9px; gap: 9px; }
  .bar { width: 10px; height: 420px; margin-top: 1px; border-radius: 5px; background: #4d576a; }
  .tree { display: flex; flex-direction: column; gap: 8px; }
  .nav { grid-area: 1 / 1; place-self: end center; margin-bottom: 12px; }
`, `<svg class="scene" viewBox="112 374 2496 1272" preserveAspectRatio="xMidYMid slice" aria-label="モデル">
    <defs>
      <filter id="soft" x="-20%" y="-100%" width="140%" height="300%"><feGaussianBlur stdDeviation="10"/></filter>
      <linearGradient id="head"><stop offset="0" stop-color="#252525"/><stop offset=".4" stop-color="#272727"/><stop offset="1" stop-color="#2d2d2e"/></linearGradient>
      <linearGradient id="front"><stop offset="0" stop-color="#323232"/><stop offset="1" stop-color="#393939"/></linearGradient>
      <linearGradient id="low"><stop offset="0" stop-color="#292929"/><stop offset="1" stop-color="#2f2f30"/></linearGradient>
      <linearGradient id="side"><stop offset="0" stop-color="#454546"/><stop offset="1" stop-color="#404040"/></linearGradient>
    </defs>
    <g fill="none">${GRID}</g>${ROBOT}${CUBE}
  </svg>
  <div class="side">
    <slot name="browser"></slot>
    <div class="browser"><div class="bar"></div><div class="tree" role="tree"><slot name="tree"></slot></div></div>
    <slot name="comment"></slot>
  </div>
  <div class="nav"><slot name="nav"></slot></div>`);

define('panel-bar', `
  :host { display: flex; align-items: center; height: 50px; padding: 0 24px 0 10px; background: var(--panel); border: 2px solid #4a5567; }
  .fold { width: 16px; margin-right: 28px; }
  span { flex: 1; }
`, el => `<div class="fold">${el.hasAttribute('collapsible') ? `<button aria-label="たたむ">${icon('back2')}</button>` : ''}</div>
  <span><slot></slot></span><button aria-label="切り替え">${icon(el.getAttribute('icon'))}</button>`);

define('tree-row', `
  :host { display: flex; align-items: center; height: 40px; gap: 12px; white-space: nowrap; }
  :host([level="1"]) { padding-left: 36px; }
  :host([level="2"]) { padding-left: 72px; font-size: 24px; }
  .chev { width: 32px; }
  .chip { display: flex; align-items: center; height: 40px; padding: 0 20px 0 6px; background: var(--panel); }
  .eye { margin-right: 18px; }
  .text { padding-left: 28px; }
  :host([root]) .chip { padding: 0; }
  :host([root]) .eye { margin: 0; padding: 4px 12px 4px 6px; }
  :host([root]) .name { display: flex; align-items: center; height: 40px; background: var(--dark); padding: 0 20px 0 6px; }
  :host([root]) .radio { padding: 4px 12px 4px 6px; }
  .name { display: flex; align-items: center; }
`, el => {
  const a = n => el.getAttribute(n);
  return `<div class="chev">${a('state') ? `<button aria-label="展開">${icon(a('state'))}</button>` : ''}</div>
    <div class="chip">${a('eye') ? `<button class="eye" aria-label="表示">${icon(a('eye'))}</button>` : ''}
    <div class="name"><ui-icon name="${a('icon')}" size="32"></ui-icon><span class="text"><slot></slot></span></div>
    ${el.hasAttribute('root') ? `<button class="radio" aria-label="アクティブ">${icon('radio')}</button>` : ''}</div>`;
});

define('nav-bar', `
  :host { display: flex; align-items: center; height: 48px; gap: 14px; padding: 0 4px 0 6px; background: var(--panel); }
  div { display: flex; align-items: center; gap: 18px; }
  div + div { gap: 12px; }
  button { gap: 8px; }
`, `<div><button aria-label="オービット">${icon('orbit')}${icon('tri12')}</button><button aria-label="ビュー正面">${icon('lookat')}</button><button aria-label="画面移動">${icon('hand')}</button>
    <button aria-label="ズーム">${icon('zoom')}</button><button aria-label="ウィンドウズーム">${icon('zoomwin')}${icon('tri12')}</button></div>
  <div><button aria-label="表示設定">${icon('monitor')}${icon('tri12')}</button><button aria-label="グリッド">${icon('grid')}${icon('tri12')}</button><button aria-label="ビューポート">${icon('quad')}${icon('tri12')}</button></div>`);

/* ---------- timeline ---------- */
const FEATURES = 'EFFSESESESESESESESESESESESEFFFFSESIIPISSESEC';
const FEATURE_ICON = { E: 'extrude', F: 'fillet', S: 'sketchpen', I: 'image', P: 'plane', C: 'combine' };
define('time-line', `
  :host { display: block; height: 101px; padding-top: 7px; background: var(--panel); }
  .scroll { height: 12px; margin: 0 13px 0 581px; border-radius: 6px; background: #566174; }
  .row { display: flex; align-items: center; height: 82px; padding: 0 24px 0 22px; }
  .controls { display: flex; gap: 24px; padding-top: 4px; margin-right: 26px; }
  .steps { display: flex; flex-direction: column; align-self: start; padding-top: 17px; }
  ol { display: flex; gap: 16px; padding-left: 18px; }
  .track { display: flex; align-items: flex-end; gap: 4px; height: 14px; margin: 6px 14px 0 0; }
  .track i { width: 8px; height: 4px; background: var(--line); }
  .track i:first-child { width: 6px; }
  .track b { flex: 1; height: 14px; border-bottom: 4px solid var(--line); background: repeating-linear-gradient(90deg, transparent 0 12px, var(--line) 12px 16px, transparent 16px 48px); }
  .marker { align-self: start; flex: none; margin: 5px 0 0 -4px; }
  .gear { margin: 4px 0 0 auto; }
`, `<div class="scroll"></div>
  <div class="row">
    <div class="controls">${[['first', '先頭'], ['prev', '前'], ['play', '再生'], ['next', '次'], ['last', '末尾']].map(([n, t]) => `<button aria-label="${t}">${icon(n)}</button>`).join('')}</div>
    <div class="steps"><ol>${[...FEATURES].map(f => `<li>${icon(FEATURE_ICON[f], 32)}</li>`).join('')}</ol><div class="track"><i></i><i></i><b></b></div></div>
    <svg class="marker" width="22" height="64" viewBox="0 0 22 64"><path d="M0 0H22V10L14 18V64H10V18L0 10Z" fill="#d0d2d8"/></svg>
    <button class="gear" aria-label="設定">${icon('gear')}</button>
  </div>`);
</script>
</body>
</html>
